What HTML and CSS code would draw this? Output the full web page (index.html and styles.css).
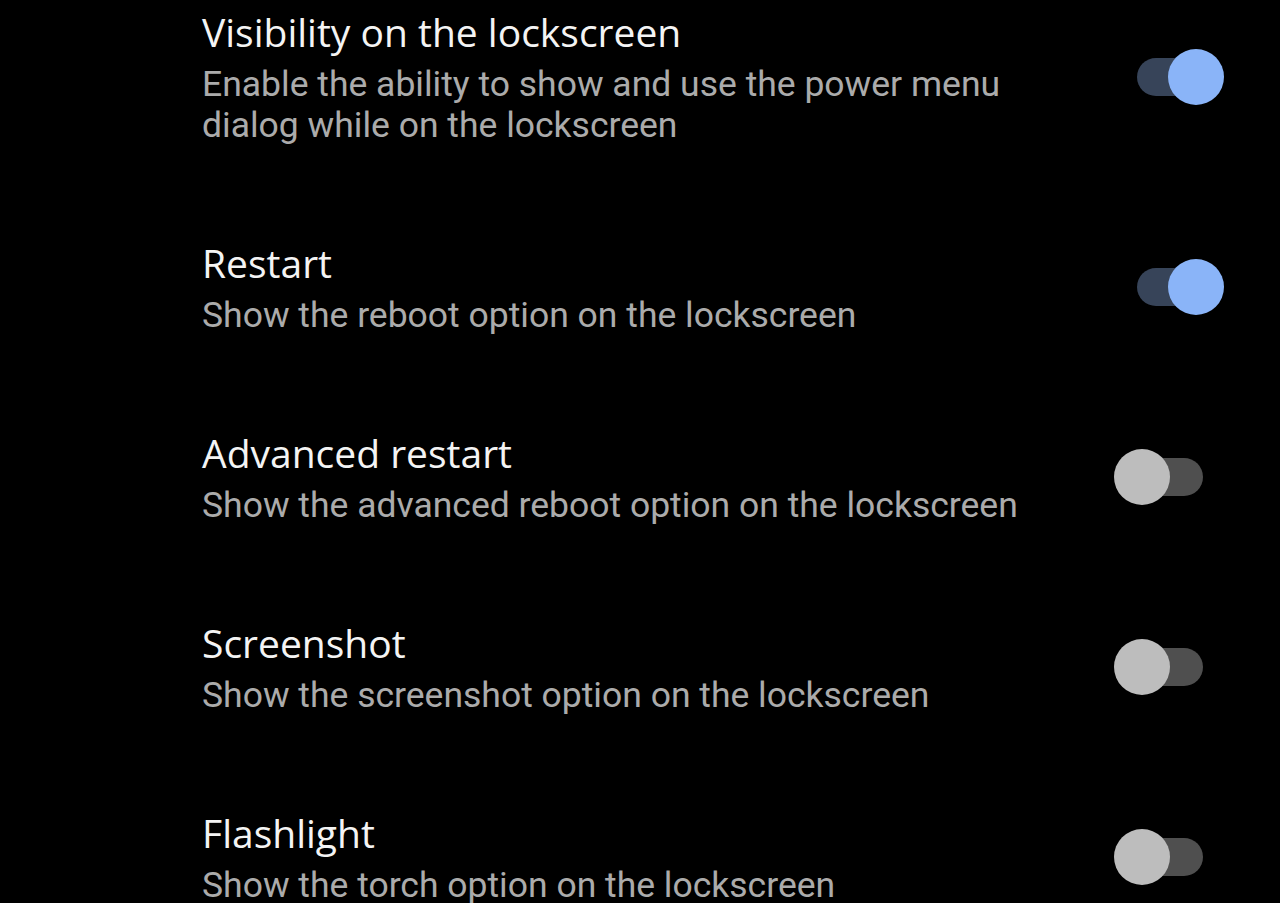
FILE: index.html
```html
<!DOCTYPE html>
<html lang="en">
<head>
  <meta charset="UTF-8" />
  <meta name="viewport" content="width=device-width, initial-scale=1.0"/>
  <title>Power menu</title>
  <link rel="stylesheet" href="styles.css">
</head>
<body>

<!-- SETTINGS LIST -->
<div class="settings">
  <div class="row">
    <div class="text">
      <div class="title">Visibility on the lockscreen</div>
      <div class="summary">Enable the ability to show and use the power menu<br>dialog while on the lockscreen</div>
    </div>
    <div class="switch on"><span class="track"></span><span class="thumb"></span></div>
  </div>

  <div class="row">
    <div class="text">
      <div class="title">Restart</div>
      <div class="summary">Show the reboot option on the lockscreen</div>
    </div>
    <div class="switch on"><span class="track"></span><span class="thumb"></span></div>
  </div>

  <div class="row">
    <div class="text">
      <div class="title">Advanced restart</div>
      <div class="summary">Show the advanced reboot option on the lockscreen</div>
    </div>
    <div class="switch"><span class="track"></span><span class="thumb"></span></div>
  </div>

  <div class="row">
    <div class="text">
      <div class="title">Screenshot</div>
      <div class="summary">Show the screenshot option on the lockscreen</div>
    </div>
    <div class="switch"><span class="track"></span><span class="thumb"></span></div>
  </div>

  <div class="row">
    <div class="text">
      <div class="title">Flashlight</div>
      <div class="summary">Show the torch option on the lockscreen</div>
    </div>
    <div class="switch"><span class="track"></span><span class="thumb"></span></div>
  </div>
</div>

</body>
</html>
```

FILE: styles.css
```css
:root {
  --bg: #000000;
  --title: #f4f4f4;
  --summary: #ababab;
  --on-thumb: #8ab4f8;
  --on-track: #374459;
  --off-thumb: #bdbdbd;
  --off-track: #4f4f4f;
}

* {
  box-sizing: border-box;
  margin: 0;
  padding: 0;
}

html, body {
  height: 100%;
  overflow: hidden;
}

body {
  background: var(--bg);
  font-family: 'Roboto', sans-serif;
}

.settings {
  margin-top: -39px;
  padding: 0 56px 0 202px;
}

.row {
  display: flex;
  align-items: center;
  justify-content: space-between;
  padding: 46px 0;
}

.title {
  font-family: 'Open Sans', 'Roboto', sans-serif;
  font-size: 39px;
  line-height: 50px;
  color: var(--title);
  margin-bottom: 7px;
}

.summary {
  font-size: 35.5px;
  line-height: 41px;
  color: var(--summary);
}

.switch {
  position: relative;
  width: 110px;
  height: 56px;
  flex-shrink: 0;
}

.track {
  position: absolute;
  top: 9px;
  left: 23px;
  width: 66px;
  height: 38px;
  border-radius: 19px;
  background: var(--off-track);
}

.thumb {
  position: absolute;
  top: 0;
  left: 0;
  width: 56px;
  height: 56px;
  border-radius: 50%;
  background: var(--off-thumb);
}

.switch.on .track {
  background: var(--on-track);
}

.switch.on .thumb {
  left: 54px;
  background: var(--on-thumb);
}
```
